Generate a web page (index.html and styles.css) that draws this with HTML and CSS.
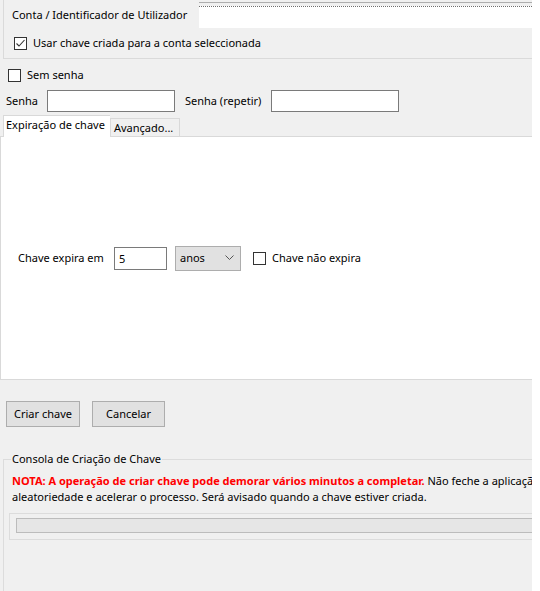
FILE: index.html
```html
<!DOCTYPE html>
<html lang="pt">
<head>
<meta charset="utf-8">
<title>Criar chave</title>
<link rel="stylesheet" href="styles.css">
</head>
<body>
<div class="window">
  <div class="account-panel">
    <div class="account-row">
      <span class="account-label">Conta / Identificador de Utilizador</span>
      <div class="account-field"><div class="account-field-inner"></div></div>
    </div>
    <div class="check-row account-check">
      <span class="box"><svg width="11" height="11" viewBox="0 0 11 11"><polyline points="1.5,5.5 4,8 9.5,2" fill="none" stroke="#333" stroke-width="1.1"/></svg></span>
      <span>Usar chave criada para a conta seleccionada</span>
    </div>
  </div>

  <div class="check-row nopass">
    <span class="box"></span>
    <span>Sem senha</span>
  </div>

  <div class="pass-row">
    <span class="pass-label">Senha</span>
    <span class="text-input pass-input"></span>
    <span class="pass-label repeat">Senha (repetir)</span>
    <span class="text-input pass-input"></span>
  </div>

  <div class="tabs">
    <div class="tab active">Expiração de chave</div>
    <div class="tab inactive">Avançado...</div>
  </div>
  <div class="tab-panel">
    <div class="expiry-row">
      <span class="expiry-label">Chave expira em</span>
      <span class="text-input num-input">5</span>
      <span class="select">anos<svg class="chev" width="9" height="5" viewBox="0 0 9 5"><polyline points="0.5,0.5 4.5,4.5 8.5,0.5" fill="none" stroke="#555" stroke-width="1"/></svg></span>
      <span class="check-row noexp"><span class="box"></span><span>Chave não expira</span></span>
    </div>
  </div>

  <div class="buttons">
    <span class="btn btn-create">Criar chave</span>
    <span class="btn btn-cancel">Cancelar</span>
  </div>

  <fieldset class="console">
    <legend>Consola de Criação de Chave</legend>
    <div class="console-line"><b class="note">NOTA: A operação de criar chave pode demorar vários minutos a completar.</b> Não feche a aplicação</div>
    <div class="console-line">aleatoriedade e acelerar o processo. Será avisado quando a chave estiver criada.</div>
    <div class="progress-box"><div class="progress-bar"></div></div>
  </fieldset>
</div>
</body>
</html>
```
FILE: styles.css
```css
html, body {
  margin: 0;
  padding: 0;
  background: #ffffff;
}
body {
  font-family: "Noto Sans", "Open Sans", sans-serif;
  font-size: 11px;
  line-height: 16px;
  color: #000;
}
.window {
  width: 532px;
  height: 591px;
  background: #f0f0f0;
  overflow: hidden;
}
.account-panel {
  margin-left: 3px;
  height: 58px;
  border-left: 1px solid #dadada;
  border-bottom: 1px solid #dadada;
}
.account-row {
  display: flex;
  height: 28px;
}
.account-label {
  width: 195px;
  box-sizing: border-box;
  padding-left: 8px;
  margin-top: 7px;
  white-space: nowrap;
}
.account-field {
  flex: 1;
  margin-top: 2px;
  border-top: 1px solid #adadad;
  padding-top: 3px;
}
.account-field-inner {
  border-top: 1px dotted #6e6e6e;
  height: 21px;
  background: #ffffff;
}
.check-row {
  display: flex;
  align-items: center;
  gap: 6px;
  white-space: nowrap;
}
.box {
  width: 11px;
  height: 11px;
  border: 1px solid #333333;
  background: #ffffff;
  display: inline-flex;
}
.account-check {
  margin-top: 7px;
  margin-left: 10px;
}
.nopass {
  margin-top: 8px;
  margin-left: 8px;
}
.pass-row {
  display: flex;
  align-items: center;
  margin-top: 7px;
  height: 22px;
}
.pass-label {
  width: 47px;
  padding-left: 6px;
  box-sizing: border-box;
  white-space: nowrap;
}
.pass-label.repeat {
  width: 96px;
  padding-left: 10px;
}
.text-input {
  box-sizing: border-box;
  border: 1px solid #7a7a7a;
  background: #ffffff;
  height: 22px;
}
.pass-input {
  width: 128px;
}
.tabs {
  position: relative;
  z-index: 1;
  display: flex;
  align-items: flex-end;
  height: 22px;
  margin-top: 3px;
  margin-bottom: -1px;
  padding-left: 3px;
}
.tab {
  box-sizing: border-box;
  white-space: nowrap;
}
.tab.inactive {
  width: 70px;
  height: 19px;
  border: 1px solid #d9d9d9;
  background: #f0f0f0;
  padding-left: 3px;
  line-height: 18px;
}
.tab.active {
  width: 107px;
  height: 22px;
  background: #ffffff;
  border: 1px solid #d9d9d9;
  border-bottom: none;
  border-right: none;
  padding-left: 2px;
  line-height: 18px;
}
.tab-panel {
  box-sizing: border-box;
  height: 244px;
  background: #ffffff;
  border: 1px solid #d9d9d9;
  border-right: none;
  display: flex;
  align-items: center;
  padding-left: 17px;
}
.expiry-row {
  display: flex;
  align-items: center;
}
.expiry-label {
  width: 96px;
  white-space: nowrap;
}
.num-input {
  width: 53px;
  height: 23px;
  padding-left: 4px;
  line-height: 21px;
}
.select {
  box-sizing: border-box;
  width: 66px;
  height: 25px;
  margin-left: 8px;
  border: 1px solid #adadad;
  background: #e1e1e1;
  display: flex;
  align-items: center;
  justify-content: space-between;
  padding: 0 6px 0 4px;
}
.chev {
  margin-top: -2px;
}
.noexp {
  margin-left: 12px;
}
.buttons {
  display: flex;
  gap: 12px;
  margin-top: 21px;
  padding-left: 6px;
}
.btn {
  box-sizing: border-box;
  height: 26px;
  border: 1px solid #adadad;
  background: #e1e1e1;
  display: flex;
  align-items: center;
  justify-content: center;
  white-space: nowrap;
}
.btn-create {
  width: 74px;
}
.btn-cancel {
  width: 73px;
}
.console {
  margin: 24px 0 0 3px;
  padding: 0 0 0 8px;
  border: 1px solid #dcdcdc;
  border-right: none;
  border-bottom: none;
  min-width: 0;
  height: 200px;
}
.console legend {
  padding: 0 1px;
  margin-left: -1px;
  white-space: nowrap;
}
.console-line {
  white-space: nowrap;
  overflow: hidden;
}
.console-line:first-of-type {
  margin-top: 6px;
}
.note {
  color: #ff0000;
}
.progress-box {
  margin: 8px 0 0 -3px;
  height: 27px;
  box-sizing: border-box;
  border: 1px solid #dcdcdc;
  border-right: none;
  padding: 4px 0 0 6px;
}
.progress-bar {
  height: 15px;
  box-sizing: border-box;
  border: 1px solid #bcbcbc;
  border-right: none;
  background: #e6e6e6;
}
```
